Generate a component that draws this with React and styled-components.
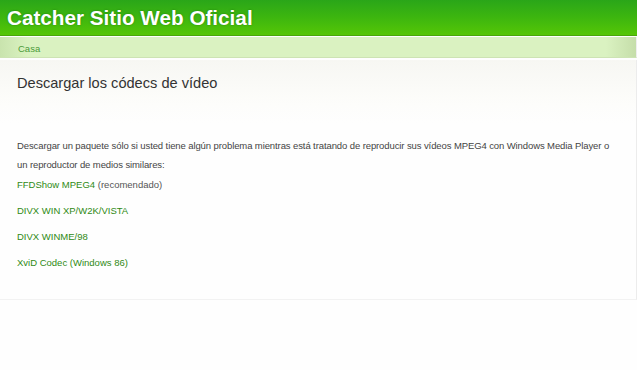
import React from "react";
import styled, { createGlobalStyle } from "styled-components";

const GlobalStyle = createGlobalStyle`
  html, body {
    margin: 0;
    padding: 0;
    background: #fefefe;
    font-family: "Liberation Sans", Arial, sans-serif;
  }
`;

const Page = styled.div`
  width: 637px;
`;

const Header = styled.header`
  height: 35px;
  background: linear-gradient(to bottom, #2aa619 0%, #3db60f 50%, #55c606 100%);
  border-bottom: 1px solid #4aa60a;
  display: flex;
  align-items: center;
  padding-left: 7px;
`;

const SiteTitle = styled.h1`
  margin: 0;
  font-size: 20.7px;
  font-weight: bold;
  color: #fff;
  text-shadow: 0 0 2px rgba(0, 80, 0, 0.5);
`;

const Crumbs = styled.nav`
  margin-top: 1px;
  height: 21px;
  border-bottom: 1px solid #cde3b4;
  background:
    linear-gradient(to right, rgba(180, 210, 150, 0.45) 0px, rgba(218, 242, 192, 0) 28px),
    linear-gradient(to left, rgba(180, 205, 150, 0.55) 0px, rgba(218, 242, 192, 0) 30px),
    #daf2c1;
  display: flex;
  align-items: center;
  padding: 2px 0 0 18px;
  box-sizing: border-box;
  border-right: 1px solid #eee;
`;

const CrumbLink = styled.a`
  font-size: 9.5px;
  color: #4b9a3a;
  text-decoration: none;
`;

const Panel = styled.main`
  margin-top: 2px;
  border-right: 1px solid #ececec;
  border-bottom: 1px solid #f2f2f2;
`;

const PageHead = styled.div`
  height: 64px;
  background: linear-gradient(to bottom, #f7f7f3 0%, #fdfdfb 70%, #fefefe 100%);
  padding: 15px 17px 0;
  box-sizing: border-box;
`;

const PageTitle = styled.h2`
  margin: 0;
  font-size: 14.6px;
  font-weight: normal;
  color: #333;
`;

const Body = styled.div`
  padding: 12px 17px 20px;
`;

const Text = styled.p`
  margin: 0 0 1px;
  font-size: 9.5px;
  letter-spacing: -0.1px;
  line-height: 19px;
  color: #444;
`;

const LinkRow = styled.p`
  margin: 0 0 7px;
  font-size: 9.5px;
  line-height: 19px;
  color: #555;
`;

const Download = styled.a`
  color: #2f8a14;
  text-decoration: none;
`;

const links = [
  { name: "FFDShow MPEG4", note: "(recomendado)" },
  { name: "DIVX WIN XP/W2K/VISTA" },
  { name: "DIVX WINME/98" },
  { name: "XviD Codec (Windows 86)" },
];

const App = () => (
  <Page>
    <GlobalStyle />
    <Header>
      <SiteTitle>Catcher Sitio Web Oficial</SiteTitle>
    </Header>
    <Crumbs>
      <CrumbLink href="#">Casa</CrumbLink>
    </Crumbs>
    <Panel>
      <PageHead>
        <PageTitle>Descargar los códecs de vídeo</PageTitle>
      </PageHead>
      <Body>
        <Text>
          Descargar un paquete sólo si usted tiene algún problema mientras está
          tratando de reproducir sus vídeos MPEG4 con Windows Media Player o un
          reproductor de medios similares:
        </Text>
        {links.map((l) => (
          <LinkRow key={l.name}>
            <Download href="#">{l.name}</Download>
            {l.note ? ` ${l.note}` : null}
          </LinkRow>
        ))}
      </Body>
    </Panel>
  </Page>
);

export default App;
